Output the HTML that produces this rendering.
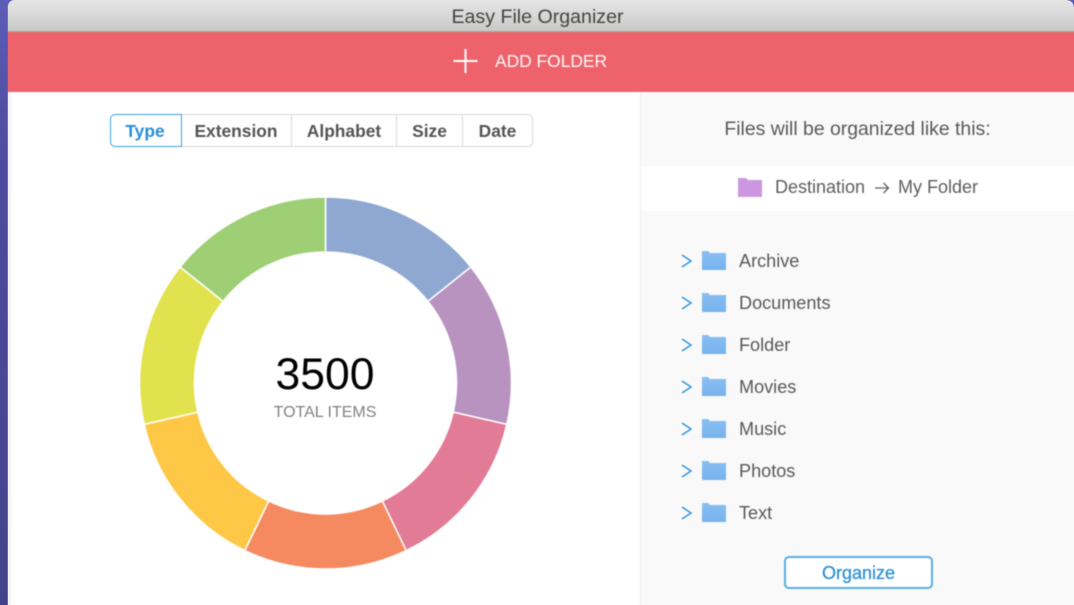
<!DOCTYPE html>
<html>
<head>
<meta charset="utf-8">
<style>
html,body{margin:0;padding:0;width:1074px;height:605px;overflow:hidden}
body{position:relative;font-family:"Liberation Sans",sans-serif}
#clip{position:absolute;left:0;top:0;width:1074px;height:605px;overflow:hidden;contain:paint;background:linear-gradient(180deg,#5d5cb8 0,#4d4c9f 25%,#43438a 100%)}
.a{position:absolute;white-space:nowrap}
#base{position:absolute;left:8px;top:0;width:1066px;height:605px;border-radius:7px 7px 0 0;background:linear-gradient(180deg,#e6e6e6 0,#c9c9c7 31px,#ee636b 32px,#ee636b 92px,#fff 92px)}
#win{position:absolute;left:8px;top:0;width:1066px;height:605px;border-radius:7px 7px 0 0;overflow:visible;filter:blur(.4px)}
#title{position:absolute;left:0;top:0;width:1076px;height:31px;background:linear-gradient(180deg,#e6e6e6,#c9c9c7);border-bottom:1px solid #a9aaa2;border-radius:7px 0 0 0;box-sizing:content-box}
#bar{position:absolute;left:0;top:32px;width:1076px;height:60px;background:#ee636b}
#edge{position:absolute;left:0;top:92px;width:3px;height:513px;background:#f1f1f1}
#right{position:absolute;left:632px;top:92px;width:444px;height:523px;background:#f9f9f9;border-left:1px solid #eeeeee}
#white{position:absolute;left:0;top:92px;width:633px;height:523px;background:#fff}
#dest{position:absolute;left:633px;top:166px;width:443px;height:45px;background:#fff}
.seg{position:absolute;top:114px;height:33px;box-sizing:border-box;border:1px solid #d8d8d8;border-left:0;color:#555;font-size:17.4px;font-weight:bold;line-height:33px;text-align:center}
.t{position:absolute;left:731px;color:#595959;font-size:18.1px;line-height:20px;white-space:nowrap}
#corner{position:absolute;right:0;top:0;width:7px;height:7px;background:radial-gradient(circle at 0 100%,transparent 6.500px,#5d5cb8 7px)}
</style>
</head>
<body>
<div id="clip">
<div id="base"></div>
<div id="win">
  <div id="white"></div>
  <div id="title"></div>
  <div class="a" style="left:0;width:1059px;top:6px;text-align:center;color:#444;font-size:19.6px;line-height:23px">Easy File Organizer</div>
  <div id="bar"></div>
  <div id="edge"></div>
  <svg class="a" style="left:445px;top:49px" width="25" height="25" viewBox="0 0 25 25"><path d="M12.500 0V24M0.500 12H24.500" stroke="#fff" stroke-width="2" fill="none"/></svg>
  <div class="a" style="left:487px;top:51px;color:#fff;font-size:17.4px;line-height:21px;opacity:.95">ADD FOLDER</div>

  <div id="right"></div>
  <div id="dest"></div>

  <div class="seg" style="left:102px;width:72px;border:1.5px solid #3b9fe2;border-radius:5px 0 0 5px;color:#2a90d8;background:#fff;z-index:2;line-height:32px;padding-right:2px">Type</div>
  <div class="seg" style="left:173px;width:111px">Extension</div>
  <div class="seg" style="left:284px;width:105px">Alphabet</div>
  <div class="seg" style="left:389px;width:66px">Size</div>
  <div class="seg" style="left:455px;width:70px;border-right:1px solid #d8d8d8;border-radius:0 5px 5px 0">Date</div>

  <svg class="a" style="left:-8px;top:0" width="660" height="605" viewBox="0 0 660 605">
    <g stroke="#fff" stroke-width="1.500">
      <path fill="#8fa8d2" d="M325.500 197A186 186 0 0 1 470.900 267L427.900 301.300A131 131 0 0 0 325.500 252Z"/>
      <path fill="#b993c0" d="M470.900 267A186 186 0 0 1 506.800 424.400L453.200 412.100A131 131 0 0 0 427.900 301.300Z"/>
      <path fill="#e27b95" d="M506.800 424.400A186 186 0 0 1 406.200 550.600L382.300 501A131 131 0 0 0 453.200 412.100Z"/>
      <path fill="#f58a60" d="M406.200 550.600A186 186 0 0 1 244.800 550.600L268.700 501A131 131 0 0 0 382.300 501Z"/>
      <path fill="#fec846" d="M244.800 550.600A186 186 0 0 1 144.200 424.400L197.800 412.100A131 131 0 0 0 268.700 501Z"/>
      <path fill="#e2e24f" d="M144.200 424.400A186 186 0 0 1 180.100 267L223.100 301.300A131 131 0 0 0 197.800 412.100Z"/>
      <path fill="#9fcf75" d="M180.100 267A186 186 0 0 1 325.500 197V252A131 131 0 0 0 223.100 301.300Z"/>
    </g>
  </svg>
  <div class="a" style="left:217px;width:200px;top:349px;text-align:center;color:#000;font-size:44.500px;line-height:52px">3500</div>
  <div class="a" style="left:217px;width:200px;top:403px;text-align:center;color:#828282;font-size:16px;line-height:19px">TOTAL ITEMS</div>

  <div class="a" style="left:633px;width:433px;top:119px;text-align:center;color:#595959;font-size:19.400px;line-height:21px">Files will be organized like this:</div>

  <svg class="a" style="left:730px;top:177px" width="24" height="20" viewBox="0 0 24 20"><path d="M0 1.500Q0 1 .5 1H8L10 3H23.500Q24 3 24 3.500V19.500Q24 20 23.500 20H.5Q0 20 0 19.500Z" fill="#cd96e0"/></svg>
  <div class="a" style="left:767px;top:177px;color:#5e5e5e;font-size:18px;line-height:21px">Destination</div>
  <svg class="a" style="left:866px;top:181px" width="16" height="14" viewBox="0 0 16 14"><path d="M1 7H14.500M9.500 2L14.500 7L9.500 12" stroke="#5e5e5e" stroke-width="1.300" fill="none"/></svg>
  <div class="a" style="left:890px;top:177px;color:#5e5e5e;font-size:18px;line-height:21px">My Folder</div>

  <svg class="a" style="left:670px;top:250px" width="50" height="280" viewBox="0 0 50 280">
    <defs>
      <linearGradient id="f" x1="0" y1="0" x2="0" y2="1"><stop offset="0" stop-color="#88c0f3"/><stop offset="1" stop-color="#78b2ec"/></linearGradient>
      <g id="r">
        <path d="M4 5L13 11L4 17" stroke="#2f95e0" stroke-width="1.500" fill="none"/>
        <path d="M24 1.500Q24 1 24.500 1H30L32 3H47.500Q48 3 48 3.500V19.500Q48 20 47.500 20H24.500Q24 20 24 19.500Z" fill="url(#f)"/>
      </g>
    </defs>
    <use href="#r" y="0"/><use href="#r" y="42"/><use href="#r" y="84"/><use href="#r" y="126"/><use href="#r" y="168"/><use href="#r" y="210"/><use href="#r" y="252"/>
  </svg>
  <div class="t" style="top:251px">Archive</div>
  <div class="t" style="top:293px">Documents</div>
  <div class="t" style="top:335px">Folder</div>
  <div class="t" style="top:377px">Movies</div>
  <div class="t" style="top:419px">Music</div>
  <div class="t" style="top:461px">Photos</div>
  <div class="t" style="top:503px">Text</div>

  <div class="a" style="left:776px;top:556px;width:149px;height:33px;box-sizing:border-box;border:2px solid #57aee3;border-radius:5px;background:#fff;color:#2a90d8;font-size:18px;line-height:31px;text-align:center;-webkit-text-stroke:.25px #2a90d8">Organize</div>
</div>
<div id="corner"></div>
</div>
</body>
</html>
